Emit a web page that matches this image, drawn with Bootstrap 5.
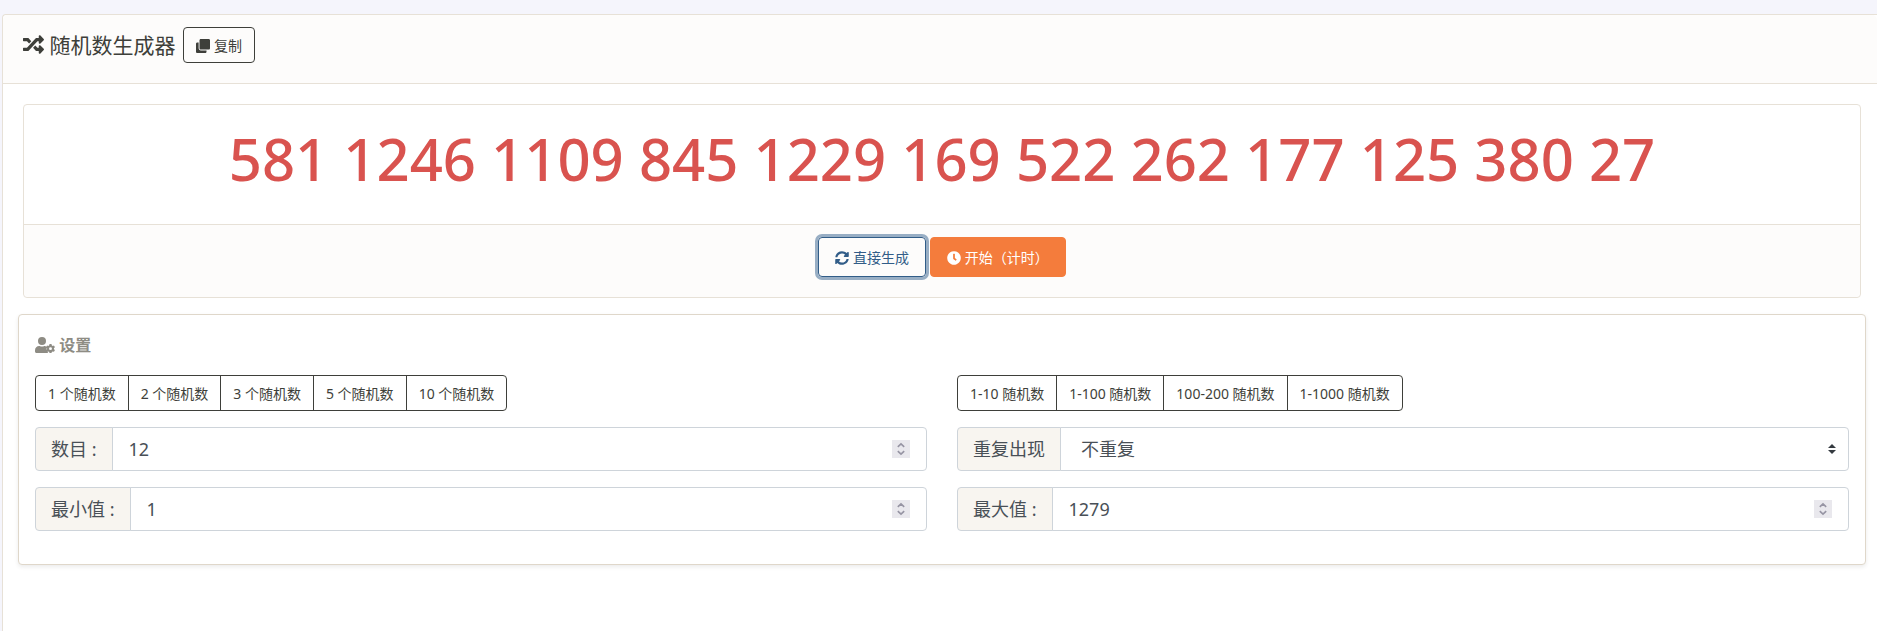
<!DOCTYPE html>
<html lang="zh-CN">
<head>
<meta charset="utf-8">
<meta name="viewport" content="width=device-width, initial-scale=1">
<title>随机数生成器</title>
<link href="https://cdn.jsdelivr.net/npm/bootstrap@5.3.0/dist/css/bootstrap.min.css" rel="stylesheet">
<style>
  body { background: #f5f5fc; color: #3e3f3a; font-family: "Noto Sans", "Noto Sans CJK SC", sans-serif; font-size: 16px; line-height: 24px; }
  .icon { display: inline-block; width: 1em; height: 1em; fill: currentColor; vertical-align: -2px; }
  .icon-wide { width: 20px; }
  .card { border-color: #e7e1d7; border-radius: 4px; color: inherit; }
  .card-header, .card-footer { background: #fdfcfb; border-color: #e7e1d7; }
  .page-card { margin: 14px 0 0 2px; min-height: calc(100vh - 14px); border-right: 0; border-bottom: 0; border-radius: 4px 0 0 0; }
  .page-card > .card-header { padding: 12px 20px 20px; }
  .page-card > .card-body { padding: 20px 11px 20px 15px; }
  .page-title { font-size: 21px; line-height: 36px; }
  .btn { font-size: 14px; line-height: 22px; border-radius: 4px; }
  .btn-sm { padding: 7px 12px 5px; }
  .btn-main { padding: 9px 16px 7px; }
  .btn-outline-dark { --bs-btn-color: #3e3f3a; --bs-btn-border-color: #3e3f3a; --bs-btn-hover-bg: #3e3f3a; }
  .btn-generate { color: #325d88; border-color: #325d88; box-shadow: 0 0 0 3px #98aec4; }
  .btn-timer, .btn-timer:hover { color: #fff; background: #f47c3c; border-color: #f47c3c; }
  .result-card { margin: 0 5px 16px; }
  .result-text { color: #d9534f; font-size: 58px; font-weight: 500; line-height: 79px; padding: 14px 20px 26px; }
  .result-card > .card-footer { padding: 12px 20px 20px; }
  .settings-card { border-color: #dfd7ca; box-shadow: 0 2px 4px rgba(0, 0, 0, .08); padding: 16px 16px 33px; }
  .settings-title { color: #8e8c84; font-size: 16px; font-weight: 600; line-height: 28px; margin-bottom: 16px; }
  .settings-grid { --bs-gutter-x: 30px; --bs-gutter-y: 16px; }
  .input-group-text, .form-control, .form-select { font-size: 18px; line-height: 26px; color: #495057; border-color: #ced4da; border-radius: 4px; padding: 8px 16px; }
  .input-group-text { background: #f8f5f0; padding: 8px 15px; }
  .form-select { padding-left: 20px; background-size: 8px 10px; background-position: right 12px center;
    background-image: url("data:image/svg+xml,%3Csvg xmlns='http://www.w3.org/2000/svg' viewBox='0 0 4 5'%3E%3Cpath fill='%23343a40' d='M2 0L0 2h4zm0 5L0 3h4z'/%3E%3C/svg%3E"); }
  input[type=number]::-webkit-inner-spin-button { -webkit-appearance: none; opacity: 1; width: 18px; height: 18px; align-self: center;
    background: #e9e8ed url("data:image/svg+xml,%3Csvg xmlns='http://www.w3.org/2000/svg' viewBox='0 0 18 18'%3E%3Cpath fill='none' stroke='%239694a3' stroke-width='1.6' d='M5.8 6.8L9 3.8l3.2 3M5.8 11.2L9 14.2l3.2-3'/%3E%3C/svg%3E") center / 18px 18px no-repeat; }
</style>
</head>
<body>
<main class="card page-card">
  <div class="card-header d-flex align-items-center gap-2">
    <h1 class="page-title fw-normal mb-0">
      <svg class="icon" viewBox="0 0 512 512" aria-hidden="true"><path d="M504.971 359.029c9.373 9.373 9.373 24.569 0 33.941l-80 79.984c-15.01 15.01-40.971 4.49-40.971-16.971V416h-58.785a12.004 12.004 0 0 1-8.773-3.812l-70.556-75.596 53.333-57.143L352 336h32v-39.981c0-21.438 25.943-31.998 40.971-16.971l80 79.981zM12 176h84l52.781 56.551 53.333-57.143-70.556-75.596A11.999 11.999 0 0 0 122.785 96H12c-6.627 0-12 5.373-12 12v56c0 6.627 5.373 12 12 12zm372 0v39.984c0 21.46 25.961 31.98 40.971 16.971l80-79.984c9.373-9.373 9.373-24.569 0-33.941l-80-79.981C409.943 24.021 384 34.582 384 56.019V96h-58.785a12.004 12.004 0 0 0-8.773 3.812L96 336H12c-6.627 0-12 5.373-12 12v56c0 6.627 5.373 12 12 12h110.785c3.326 0 6.503-1.381 8.773-3.812L352 176h32z"/></svg>
      随机数生成器</h1>
    <button type="button" class="btn btn-sm btn-outline-dark">
      <svg class="icon" viewBox="0 0 512 512" aria-hidden="true"><path d="M464 0c26.51 0 48 21.49 48 48v288c0 26.51-21.49 48-48 48H176c-26.51 0-48-21.49-48-48V48c0-26.51 21.49-48 48-48h288M176 416c-44.112 0-80-35.888-80-80V128H48c-26.51 0-48 21.49-48 48v288c0 26.51 21.49 48 48 48h288c26.51 0 48-21.49 48-48v-48H176z"/></svg>
      复制</button>
  </div>
  <div class="card-body">
    <section class="card result-card text-center">
      <div class="result-text">581 1246 1109 845 1229 169 522 262 177 125 380 27</div>
      <div class="card-footer d-flex justify-content-center gap-1">
        <button type="button" class="btn btn-main btn-generate">
          <svg class="icon" viewBox="0 0 512 512" aria-hidden="true"><path d="M370.72 133.28C339.458 104.008 298.888 87.962 255.848 88c-77.458.068-144.328 53.178-162.791 126.85-1.344 5.363-6.122 9.15-11.651 9.15H24.103c-7.498 0-13.194-6.807-11.807-14.176C33.933 94.924 134.813 8 256 8c66.448 0 126.791 26.136 171.315 68.685L463.03 40.97C478.149 25.851 504 36.559 504 57.941V192c0 13.255-10.745 24-24 24H345.941c-21.382 0-32.09-25.851-16.971-40.971l41.75-41.749zM32 296h134.059c21.382 0 32.09 25.851 16.971 40.971l-41.75 41.75c31.262 29.273 71.835 45.319 114.876 45.28 77.418-.07 144.315-53.144 162.787-126.849 1.344-5.363 6.122-9.15 11.651-9.15h57.304c7.498 0 13.194 6.807 11.807 14.176C478.067 417.076 377.187 504 256 504c-66.448 0-126.791-26.136-171.315-68.685L48.97 471.03C33.851 486.149 8 475.441 8 454.059V320c0-13.255 10.745-24 24-24z"/></svg>
          直接生成</button>
        <button type="button" class="btn btn-main btn-timer">
          <svg class="icon" viewBox="0 0 512 512" aria-hidden="true"><path d="M256,8C119,8,8,119,8,256S119,504,256,504,504,393,504,256,393,8,256,8Zm92.49,313h0l-20,25a16,16,0,0,1-22.49,2.5h0l-67-49.72a40,40,0,0,1-15-31.23V112a16,16,0,0,1,16-16h32a16,16,0,0,1,16,16V256l58,42.5A16,16,0,0,1,348.49,321Z"/></svg>
          开始（计时）</button>
      </div>
    </section>
    <section class="card settings-card">
      <h2 class="settings-title">
        <svg class="icon icon-wide" viewBox="0 0 640 512" aria-hidden="true"><path d="M224 256a128 128 0 1 0 0-256 128 128 0 0 0 0 256zM313 288h-16a174 174 0 0 1-146 0h-17C60 288 0 348 0 422v42c0 26 22 48 48 48h352c9 0 17-2 24-6-20-12-30-34-23-56l7-18-19-11c-26-16-26-33-12-62l13-23c-17-27-46-45-77-48z"/><path fill-rule="evenodd" d="M464 224h64l8 43 30 17 41-14 32 55-33 29v36l33 29-32 55-41-14-30 17-8 43h-64l-8-43-30-17-41 14-32-55 33-29v-36l-33-29 32-55 41 14 30-17zM496 325a47 47 0 1 0 0 94 47 47 0 0 0 0-94z"/></svg>
        设置</h2>
      <div class="row settings-grid">
        <div class="col-md-6">
          <div class="btn-group" role="group" aria-label="数目">
            <button type="button" class="btn btn-sm btn-outline-dark">1 个随机数</button>
            <button type="button" class="btn btn-sm btn-outline-dark">2 个随机数</button>
            <button type="button" class="btn btn-sm btn-outline-dark">3 个随机数</button>
            <button type="button" class="btn btn-sm btn-outline-dark">5 个随机数</button>
            <button type="button" class="btn btn-sm btn-outline-dark">10 个随机数</button>
          </div>
        </div>
        <div class="col-md-6">
          <div class="btn-group" role="group" aria-label="范围">
            <button type="button" class="btn btn-sm btn-outline-dark">1-10 随机数</button>
            <button type="button" class="btn btn-sm btn-outline-dark">1-100 随机数</button>
            <button type="button" class="btn btn-sm btn-outline-dark">100-200 随机数</button>
            <button type="button" class="btn btn-sm btn-outline-dark">1-1000 随机数</button>
          </div>
        </div>
        <div class="col-md-6">
          <div class="input-group">
            <label class="input-group-text" for="count">数目 :</label>
            <input type="number" class="form-control" id="count" value="12">
          </div>
        </div>
        <div class="col-md-6">
          <div class="input-group">
            <label class="input-group-text" for="repeat">重复出现</label>
            <select class="form-select" id="repeat"><option>不重复</option><option>可重复</option></select>
          </div>
        </div>
        <div class="col-md-6">
          <div class="input-group">
            <label class="input-group-text" for="min">最小值 :</label>
            <input type="number" class="form-control" id="min" value="1">
          </div>
        </div>
        <div class="col-md-6">
          <div class="input-group">
            <label class="input-group-text" for="max">最大值 :</label>
            <input type="number" class="form-control" id="max" value="1279">
          </div>
        </div>
      </div>
    </section>
  </div>
</main>
<script src="https://cdn.jsdelivr.net/npm/bootstrap@5.3.0/dist/js/bootstrap.bundle.min.js"></script>
</body>
</html>
